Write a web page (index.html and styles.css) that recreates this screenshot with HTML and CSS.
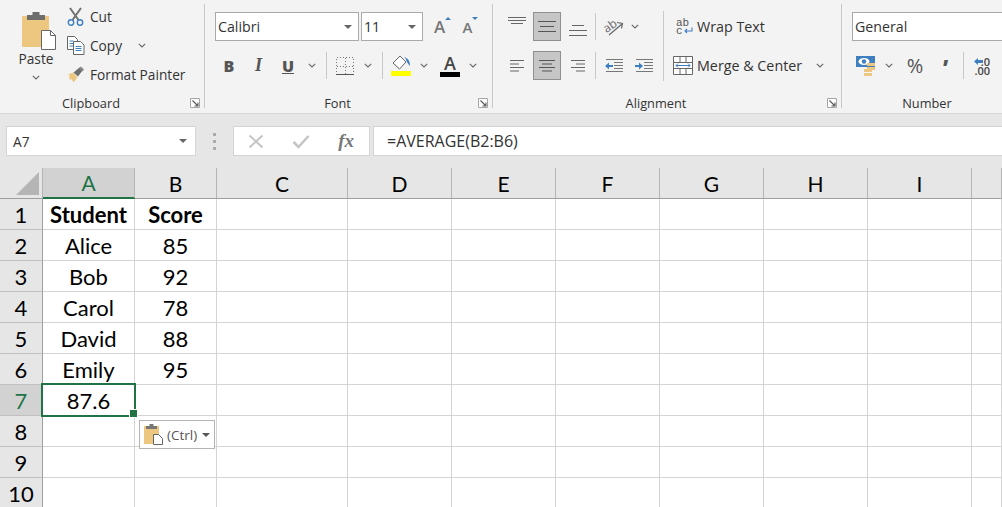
FILE: index.html
```html
<!DOCTYPE html>
<html lang="en">
<head>
    <meta charset="UTF-8">
    <title>Book1 - Excel</title>
    <link rel="stylesheet" href="styles.css">
</head>
<body>
    <svg class="defs" width="0" height="0">
        <symbol id="launcher" viewBox="0 0 10 10">
            <path d="M.5 9.500V.5h9v9z" fill="#fff" stroke="#a6a6a6"/>
            <path d="M2.500 2.500l5 5M8 4.500V8H4.500" fill="none" stroke="#555" stroke-width="1.100"/>
        </symbol>
        <symbol id="chev" viewBox="0 0 8 5">
            <path d="M.8.800L4 4 7.200.8" fill="none" stroke="#666" stroke-width="1.100"/>
        </symbol>
    </svg>

    <!-- Ribbon -->
    <div class="ribbon">
        <section class="group clipboard">
            <div class="clip-body">
                <div class="paste">
                    <svg width="34" height="38" viewBox="0 0 34 38">
                        <rect y="4" width="27" height="31" rx="1" fill="#edc77f"/>
                        <path d="M5 8V3h5.500V0h7v3H23v5z" fill="#6d6d6d"/>
                        <path d="M19.500 18.500h9l5 5v14h-14z" fill="#fff" stroke="#666"/>
                        <path d="M28.500 18.500v5h5" fill="none" stroke="#666"/>
                    </svg>
                    <span class="paste-label">Paste</span>
                    <svg class="chev" width="8" height="5"><use href="#chev"/></svg>
                </div>
                <div class="commands">
                    <div class="command">
                        <svg width="18" height="19" viewBox="0 0 18 19">
                            <path d="M3 1l8.500 12M14 1L5.500 13" fill="none" stroke="#707070" stroke-width="2"/>
                            <circle cx="4" cy="15.500" r="2.700" fill="none" stroke="#3f7fbf" stroke-width="1.400"/>
                            <circle cx="13" cy="15.500" r="2.700" fill="none" stroke="#3f7fbf" stroke-width="1.400"/>
                        </svg>
                        <span>Cut</span>
                    </div>
                    <div class="command">
                        <svg width="18" height="19" viewBox="0 0 18 19">
                            <path d="M.5.500h7l3 3v10H.5z" fill="#fff" stroke="#666"/>
                            <path d="M2.500 5h4M2.500 7.500h5M2.500 10h5" stroke="#3f7fbf"/>
                            <path d="M6.500 5.500h7l3.500 3.500v9.500H6.500z" fill="#fff" stroke="#666"/>
                            <path d="M8.500 10.500h6M8.500 12.500h6M8.500 14.500h6" stroke="#3f7fbf"/>
                        </svg>
                        <span>Copy</span>
                        <svg class="chev copy-chev" width="8" height="5"><use href="#chev"/></svg>
                    </div>
                    <div class="command">
                        <svg width="18" height="17" viewBox="0 0 18 17">
                            <path d="M1 8.500l5-2 4.500 5-4 5L4.500 13 3 14l-1-3 1-1z" fill="#edc77f"/>
                            <path d="M6.500 6.500l6-5 3 3-4.500 6z" fill="#6d6d6d"/>
                            <path d="M12 2l2-1.500 3 3-1.500 2z" fill="#8a8a8a"/>
                        </svg>
                        <span>Format Painter</span>
                    </div>
                </div>
            </div>
            <div class="group-label"><span>Clipboard</span><svg class="launcher" width="10" height="10"><use href="#launcher"/></svg></div>
        </section>

        <section class="group font">
            <div class="tool-row font-top">
                <div class="select"><span>Calibri</span><i class="caret"></i></div>
                <div class="select"><span>11</span><i class="caret"></i></div>
                <div class="tool size-a">A<svg class="size-mark" width="6" height="3"><path d="M0 3l3-3 3 3z" fill="#3f7fbf"/></svg></div>
                <div class="tool size-a small">A<svg class="size-mark" width="6" height="3"><path d="M0 0l3 3 3-3z" fill="#3f7fbf"/></svg></div>
            </div>
            <div class="tool-row font-bottom">
                <div class="tool style-b">B</div>
                <div class="tool style-i">I</div>
                <div class="tool style-u">U</div>
                <div class="tool"><svg width="8" height="5"><use href="#chev"/></svg></div>
                <div class="divider"></div>
                <div class="tool">
                    <svg width="18" height="18" viewBox="0 0 18 18" shape-rendering="crispEdges">
                        <path d="M.5.500h17v17H.5zM9 .5v17M.5 9h17" fill="none" stroke="#777" stroke-dasharray="1 2"/>
                        <path d="M0 17.500h18" stroke="#555"/>
                    </svg>
                </div>
                <div class="tool"><svg width="8" height="5"><use href="#chev"/></svg></div>
                <div class="divider"></div>
                <div class="tool">
                    <svg width="20" height="21" viewBox="0 0 20 21">
                        <path d="M9 1l6 6-6.500 7L2 8z" fill="#fff" stroke="#666"/>
                        <path d="M13 2c4 1 6 4 6 9-2-2-4-5-4-7z" fill="#3f7fbf"/>
                        <rect y="16" width="20" height="5" fill="#ffff00"/>
                    </svg>
                </div>
                <div class="tool"><svg width="8" height="5"><use href="#chev"/></svg></div>
                <div class="tool color-a">A<i class="color-bar"></i></div>
                <div class="tool"><svg width="8" height="5"><use href="#chev"/></svg></div>
            </div>
            <div class="group-label"><span>Font</span><svg class="launcher" width="10" height="10"><use href="#launcher"/></svg></div>
        </section>

        <section class="group alignment">
            <div class="align-body">
                <div class="align-tools">
                    <div class="tool-row align-top">
                        <div class="tool raised">
                            <svg width="18" height="8" viewBox="0 0 18 8"><path d="M0 .5h18M0 3.500h18M3 6.500h12" stroke="#666"/></svg>
                        </div>
                        <div class="tool active">
                            <svg width="18" height="11" viewBox="0 0 18 11"><path d="M0 .5h18M2 5.500h14M0 10.500h18" stroke="#555"/></svg>
                        </div>
                        <div class="tool lowered">
                            <svg width="18" height="11" viewBox="0 0 18 11"><path d="M3 .5h12M0 5.500h18M0 10.500h18" stroke="#666"/></svg>
                        </div>
                        <div class="divider"></div>
                        <div class="tool">
                            <svg class="open-svg" width="20" height="18" viewBox="0 0 20 18">
                                <text class="orient-text" x="0" y="11" transform="rotate(-35 8 9)">ab</text>
                                <path d="M5 17L18 6M13 4.500l5.500 1-1 5" fill="none" stroke="#666" stroke-width="1.200"/>
                            </svg>
                        </div>
                        <div class="tool"><svg width="8" height="5"><use href="#chev"/></svg></div>
                    </div>
                    <div class="tool-row align-bottom">
                        <div class="tool left-lines">
                            <svg width="14" height="12" viewBox="0 0 14 12"><path d="M0 .5h14M0 4h9M0 7.500h14M0 11h9" stroke="#666"/></svg>
                        </div>
                        <div class="tool active">
                            <svg width="18" height="12" viewBox="0 0 18 12"><path d="M1 .5h16M4 4h10M1 7.500h16M4 11h10" stroke="#555"/></svg>
                        </div>
                        <div class="tool">
                            <svg width="14" height="12" viewBox="0 0 14 12"><path d="M0 .5h14M5 4h9M0 7.500h14M5 11h9" stroke="#666"/></svg>
                        </div>
                        <div class="divider"></div>
                        <div class="tool">
                            <svg width="18" height="14" viewBox="0 0 18 14">
                                <path d="M1 .5h17M9 3.500h9M9 6.500h9M9 9.500h9M1 12.500h17" stroke="#777"/>
                                <path d="M0 7l4-3.500V6h4v2H4v2.500z" fill="#3f7fbf"/>
                            </svg>
                        </div>
                        <div class="tool">
                            <svg width="18" height="14" viewBox="0 0 18 14">
                                <path d="M1 .5h17M9 3.500h9M9 6.500h9M9 9.500h9M1 12.500h17" stroke="#777"/>
                                <path d="M8 7L4 3.500V6H0v2h4v2.500z" fill="#3f7fbf"/>
                            </svg>
                        </div>
                    </div>
                </div>
                <div class="divider tall"></div>
                <div class="wrap-merge">
                    <div class="command wide">
                        <div class="wrap-icon">
                            <div class="wrap-glyph">ab<br>c</div>
                            <svg width="9" height="7" viewBox="0 0 9 7">
                                <path d="M8 .5v3.500H1M3 2L1 4l2 2" fill="none" stroke="#3f7fbf" stroke-width="1.100"/>
                            </svg>
                        </div>
                        <span>Wrap Text</span>
                    </div>
                    <div class="command wide">
                        <svg width="20" height="19" viewBox="0 0 20 19">
                            <path d="M.5.500h19v18H.5zM.5 6.500h19M.5 12.500h19M7 .5v6M13 .5v6M7 12.500v6M13 12.500v6" fill="#fff" stroke="#666"/>
                            <rect x="1" y="7" width="18" height="5" fill="#fff"/>
                            <path d="M3 9.500h14M5 7.500l-2 2 2 2M15 7.500l2 2-2 2" fill="none" stroke="#3f7fbf"/>
                        </svg>
                        <span>Merge &amp; Center</span>
                        <svg class="chev merge-chev" width="8" height="5"><use href="#chev"/></svg>
                    </div>
                </div>
            </div>
            <div class="group-label"><span>Alignment</span><svg class="launcher" width="10" height="10"><use href="#launcher"/></svg></div>
        </section>

        <section class="group number">
            <div class="select format"><span>General</span></div>
            <div class="tool-row number-bottom">
                <div class="tool">
                    <svg width="20" height="20" viewBox="0 0 20 20">
                        <rect width="19" height="11" fill="#3f7fbf"/>
                        <ellipse cx="8" cy="5.500" rx="5.500" ry="3.500" fill="#fff"/>
                        <circle cx="8" cy="5.500" r="2.200" fill="#3f7fbf"/>
                        <path d="M11 7h8v3h-8zM11 11h8v3h-8z" fill="#edc77f"/>
                        <path d="M8 13h8v3H8zM8 17h8v3H8z" fill="#edc77f"/>
                    </svg>
                </div>
                <div class="tool"><svg width="8" height="5"><use href="#chev"/></svg></div>
                <div class="tool percent">%</div>
                <div class="tool comma">,</div>
                <div class="divider"></div>
                <div class="tool decimals">
                    <svg width="9" height="7" viewBox="0 0 9 7"><path d="M0 3.500L4 0v2h5v3H4v2z" fill="#3f7fbf"/></svg>
                    <div class="dec-text">.0<br>.00</div>
                </div>
            </div>
            <div class="group-label"><span>Number</span></div>
        </section>
    </div>

    <!-- Formula bar -->
    <div class="formula-bar">
        <div class="name-box"><span>A7</span><i class="caret"></i></div>
        <div class="grip"><i></i><i></i><i></i></div>
        <div class="fx-box">
            <svg width="16" height="15" viewBox="0 0 16 15"><path d="M1.500 1.500l13 12M14.500 1.500l-13 12" stroke="#c4c4c4" stroke-width="2"/></svg>
            <svg width="18" height="15" viewBox="0 0 18 15"><path d="M1.500 8l5 5L16.500 2" fill="none" stroke="#c4c4c4" stroke-width="2.500"/></svg>
            <span class="fx">fx</span>
        </div>
        <div class="formula-input">=AVERAGE(B2:B6)</div>
    </div>

    <!-- Sheet -->
    <div class="sheet">
        <div class="corner"><svg width="23" height="23" viewBox="0 0 23 23"><path d="M0 23L23 0v23z" fill="#b5b5b5"/></svg></div>
        <div class="col-head current">A</div>
        <div class="col-head">B</div>
        <div class="col-head">C</div>
        <div class="col-head">D</div>
        <div class="col-head">E</div>
        <div class="col-head">F</div>
        <div class="col-head">G</div>
        <div class="col-head">H</div>
        <div class="col-head">I</div>
        <div class="col-head"></div>

        <div class="row-head">1</div>
        <div class="cell head">Student</div><div class="cell head">Score</div>
        <div class="cell"></div><div class="cell"></div><div class="cell"></div><div class="cell"></div><div class="cell"></div><div class="cell"></div><div class="cell"></div><div class="cell"></div>

        <div class="row-head">2</div>
        <div class="cell">Alice</div><div class="cell">85</div>
        <div class="cell"></div><div class="cell"></div><div class="cell"></div><div class="cell"></div><div class="cell"></div><div class="cell"></div><div class="cell"></div><div class="cell"></div>

        <div class="row-head">3</div>
        <div class="cell">Bob</div><div class="cell">92</div>
        <div class="cell"></div><div class="cell"></div><div class="cell"></div><div class="cell"></div><div class="cell"></div><div class="cell"></div><div class="cell"></div><div class="cell"></div>

        <div class="row-head">4</div>
        <div class="cell">Carol</div><div class="cell">78</div>
        <div class="cell"></div><div class="cell"></div><div class="cell"></div><div class="cell"></div><div class="cell"></div><div class="cell"></div><div class="cell"></div><div class="cell"></div>

        <div class="row-head">5</div>
        <div class="cell">David</div><div class="cell">88</div>
        <div class="cell"></div><div class="cell"></div><div class="cell"></div><div class="cell"></div><div class="cell"></div><div class="cell"></div><div class="cell"></div><div class="cell"></div>

        <div class="row-head">6</div>
        <div class="cell">Emily</div><div class="cell">95</div>
        <div class="cell"></div><div class="cell"></div><div class="cell"></div><div class="cell"></div><div class="cell"></div><div class="cell"></div><div class="cell"></div><div class="cell"></div>

        <div class="row-head current">7</div>
        <div class="cell selected">87.6</div><div class="cell"></div>
        <div class="cell"></div><div class="cell"></div><div class="cell"></div><div class="cell"></div><div class="cell"></div><div class="cell"></div><div class="cell"></div><div class="cell"></div>

        <div class="row-head">8</div>
        <div class="cell"></div>
        <div class="cell has-popup">
            <div class="paste-popup">
                <svg width="19" height="21" viewBox="0 0 19 21">
                    <rect y="2" width="15" height="18" fill="#edc77f"/>
                    <path d="M2 5V2h3.500V0h4v2H13v3z" fill="#777"/>
                    <path d="M9.500 10.500h5l4 4v6h-9z" fill="#fff" stroke="#666"/>
                </svg>
                <span>(Ctrl)</span>
                <i class="caret"></i>
            </div>
        </div>
        <div class="cell"></div><div class="cell"></div><div class="cell"></div><div class="cell"></div><div class="cell"></div><div class="cell"></div><div class="cell"></div><div class="cell"></div>

        <div class="row-head">9</div>
        <div class="cell"></div><div class="cell"></div>
        <div class="cell"></div><div class="cell"></div><div class="cell"></div><div class="cell"></div><div class="cell"></div><div class="cell"></div><div class="cell"></div><div class="cell"></div>

        <div class="row-head">10</div>
        <div class="cell"></div><div class="cell"></div>
        <div class="cell"></div><div class="cell"></div><div class="cell"></div><div class="cell"></div><div class="cell"></div><div class="cell"></div><div class="cell"></div><div class="cell"></div>
    </div>
</body>
</html>
```

FILE: styles.css
```css
/* General */
* {
    box-sizing: border-box;
}

html,
body {
    margin: 0;
    height: 507px;
    overflow: hidden;
}

body {
    width: 1002px;
    background: #e6e6e6;
    color: #333;
    font-family: "Open Sans", sans-serif;
    font-size: 13.7px;
}

i {
    display: block;
}

svg {
    display: block;
    flex: none;
}

.defs {
    position: absolute;
}

.open-svg {
    overflow: visible;
}

/* Ribbon */
.ribbon {
    display: flex;
    height: 114px;
    background: #f3f3f3;
    border-bottom: 1px solid #d5d5d5;
}

.group {
    display: flex;
    flex-direction: column;
    flex: none;
    height: 104px;
    margin-top: 4px;
    padding-top: 8px;
    border-right: 1px solid #c8c8c8;
}

.group.clipboard {
    width: 205px;
}

.group.font {
    width: 288px;
    padding-left: 10px;
}

.group.alignment {
    width: 349px;
}

.group.number {
    width: 192px;
    padding-left: 10px;
    border-right: 0;
}

.group-label {
    display: grid;
    grid-template-columns: 1fr auto 1fr 22px;
    align-items: center;
    height: 20px;
    margin-top: auto;
    margin-bottom: -5px;
    font-size: 12.8px;
    line-height: 20px;
}

.font .group-label,
.number .group-label {
    margin-left: -10px;
}

.group-label span {
    grid-column: 2;
}

.launcher {
    grid-column: 4;
    justify-self: end;
    margin-right: 4px;
}

.tool-row {
    display: grid;
    height: 29px;
    align-items: center;
}

.tool {
    display: flex;
    align-items: center;
    justify-content: center;
    height: 29px;
}

.divider {
    width: 1px;
    height: 27px;
    background: #c8c8c8;
    justify-self: center;
}

.caret {
    width: 0;
    height: 0;
    border-left: 4px solid transparent;
    border-right: 4px solid transparent;
    border-top: 4px solid #666;
}

/* Clipboard */
.clip-body {
    display: flex;
}

.paste {
    display: flex;
    flex-direction: column;
    align-items: center;
    width: 72px;
}

.paste svg:first-child {
    margin-left: 22px;
    align-self: flex-start;
}

.paste-label {
    margin-top: -1px;
    line-height: 20px;
}

.paste .chev {
    margin-top: 6px;
}

.commands {
    display: flex;
    flex-direction: column;
    gap: 8px;
    margin-left: -5px;
    margin-top: -6px;
}

.command {
    display: flex;
    align-items: center;
    height: 21px;
    gap: 5px;
    white-space: nowrap;
}

.copy-chev {
    margin-left: 11px;
}

/* Font */
.font-top {
    grid-template-columns: 144px 62px 35px 17px;
    column-gap: 2px;
}

.select {
    display: flex;
    align-items: center;
    justify-content: space-between;
    height: 29px;
    padding: 0 6px 0 2px;
    background: #fff;
    border: 1px solid #a9a9a9;
    font-size: 14.2px;
}

.font-bottom {
    grid-template-columns: 28px 31px 28px 20px 8px 30px 16px 12px 26px 20px 32px 14px;
    margin-top: 10px;
}

.size-a {
    color: #777;
    font-size: 17px;
    font-weight: 600;
}

.size-a.small {
    font-size: 15px;
}

.size-mark {
    margin-top: -17px;
}

.style-b,
.style-i,
.style-u {
    color: #555;
    font-size: 16px;
    font-weight: 800;
}

.style-i {
    font-family: "Liberation Serif", serif;
    font-size: 18px;
    font-style: italic;
}

.style-u {
    text-decoration: underline;
}

.color-a {
    flex-direction: column;
    color: #444;
    font-size: 18px;
    font-weight: 600;
    line-height: 17px;
}

.color-bar {
    width: 20px;
    height: 5px;
    background: #000;
}

/* Alignment */
.align-body {
    display: flex;
}

.align-tools {
    width: 159px;
    margin-left: 11px;
}

.align-top {
    grid-template-columns: 29px 28px 33px 3px 33px 10px;
}

.align-bottom {
    grid-template-columns: 29px 28px 33px 3px 33px 28px;
    margin-top: 10px;
}

.tool.active {
    width: 28px;
    background: #c6c6c6;
    border: 1px solid #8f8f8f;
}

.raised svg {
    margin: 0 3px 11px 0;
}

.lowered svg {
    margin-top: 8px;
}

.left-lines svg {
    margin-right: 3px;
}

.orient-text {
    fill: #666;
    font-size: 12px;
}

.divider.tall {
    height: 70px;
    margin-top: -1px;
}

.wrap-merge {
    display: flex;
    flex-direction: column;
    gap: 18px;
    margin-left: 9px;
    margin-top: 4px;
}

.command.wide {
    gap: 4px;
    font-size: 14.3px;
}

.wrap-icon {
    position: relative;
    width: 17px;
    height: 16px;
    margin-left: 3px;
}

.wrap-icon svg {
    position: absolute;
    right: 0;
    top: 8px;
}

.wrap-glyph {
    color: #555;
    font-family: "Liberation Mono", monospace;
    font-size: 11px;
    line-height: 8px;
}

.merge-chev {
    margin-left: 10px;
}

/* Number */
.format {
    width: 170px;
}

.number-bottom {
    grid-template-columns: 28px 18px 34px 26px 10px 34px;
    margin-top: 10px;
}

.percent {
    color: #555;
    font-size: 20px;
}

.comma {
    color: #555;
    font-size: 21px;
    font-weight: 800;
    padding-bottom: 22px;
    padding-left: 2px;
}

.decimals {
    position: relative;
    justify-content: flex-start;
    color: #444;
    font-size: 11px;
    font-weight: 600;
}

.decimals svg {
    position: absolute;
    left: 6px;
    top: 7px;
}

.dec-text {
    width: 22px;
    line-height: 9px;
    text-align: right;
}

/* Formula bar */
.formula-bar {
    display: flex;
    align-items: stretch;
    height: 54px;
    padding: 12px 0 12px 6px;
}

.name-box {
    display: flex;
    align-items: center;
    justify-content: space-between;
    width: 190px;
    padding: 0 8px 0 6px;
    background: #fff;
    border: 1px solid #d4d4d4;
}

.grip {
    display: flex;
    flex-direction: column;
    justify-content: center;
    gap: 4px;
    width: 37px;
    padding-left: 17px;
}

.grip i {
    width: 3px;
    height: 3px;
    background: #aaa;
}

.fx-box {
    display: flex;
    align-items: center;
    justify-content: space-between;
    width: 137px;
    padding: 0 15px 0 14px;
    background: #fff;
    border: 1px solid #d4d4d4;
}

.fx {
    color: #777;
    font-family: "Liberation Serif", serif;
    font-size: 19px;
    font-style: italic;
    font-weight: 700;
}

.formula-input {
    flex: 1;
    margin-left: 3px;
    padding-left: 13px;
    line-height: 28px;
    background: #fff;
    border: 1px solid #d4d4d4;
    border-right: 0;
    color: #333;
    font-size: 16px;
}

/* Sheet */
.sheet {
    display: grid;
    grid-template-columns: 43px 92px 82px 131px repeat(6, 104px) 1fr;
    grid-auto-rows: 31px;
    background: #fff;
    font-family: Lato, sans-serif;
    color: #000;
}

.corner {
    display: flex;
    align-items: flex-end;
    justify-content: flex-end;
    padding: 0 3px 3px 0;
    background: #e6e6e6;
    border-right: 1px solid #b4b4b4;
    border-bottom: 1px solid #9e9e9e;
}

.col-head {
    display: flex;
    align-items: center;
    justify-content: center;
    background: #e6e6e6;
    border-right: 1px solid #b4b4b4;
    border-bottom: 1px solid #9e9e9e;
    font-size: 21px;
}

.col-head.current {
    background: #d2d2d2;
    border-bottom: 2px solid #217346;
    color: #217346;
}

.row-head {
    display: flex;
    align-items: center;
    justify-content: center;
    background: #e6e6e6;
    border-right: 1px solid #9e9e9e;
    border-bottom: 1px solid #c0c0c0;
    font-size: 22px;
}

.row-head.current {
    background: #d2d2d2;
    color: #217346;
}

.cell {
    display: flex;
    align-items: center;
    justify-content: center;
    border-right: 1px solid #d4d4d4;
    border-bottom: 1px solid #d4d4d4;
    font-size: 22px;
}

.cell.head {
    font-weight: 700;
}

/* Selected cell and its fill handle */
.cell.selected {
    position: relative;
}

.cell.selected::before {
    content: "";
    position: absolute;
    inset: -2px;
    border: 2px solid #217346;
}

.cell.selected::after {
    content: "";
    position: absolute;
    right: -4px;
    bottom: -3px;
    width: 7px;
    height: 7px;
    background: #217346;
    border: 1px solid #fff;
}

/* Paste options button */
.cell.has-popup {
    position: relative;
}

.paste-popup {
    position: absolute;
    left: 4px;
    top: 4px;
    display: flex;
    align-items: center;
    width: 76px;
    height: 29px;
    padding-left: 4px;
    background: #fff;
    border: 1px solid #b4b4b4;
    color: #555;
    font-family: "Open Sans", sans-serif;
    font-size: 13.5px;
}

.paste-popup span {
    margin-left: 4px;
}

.paste-popup .caret {
    margin-left: 5px;
    border-top-color: #555;
}
```
